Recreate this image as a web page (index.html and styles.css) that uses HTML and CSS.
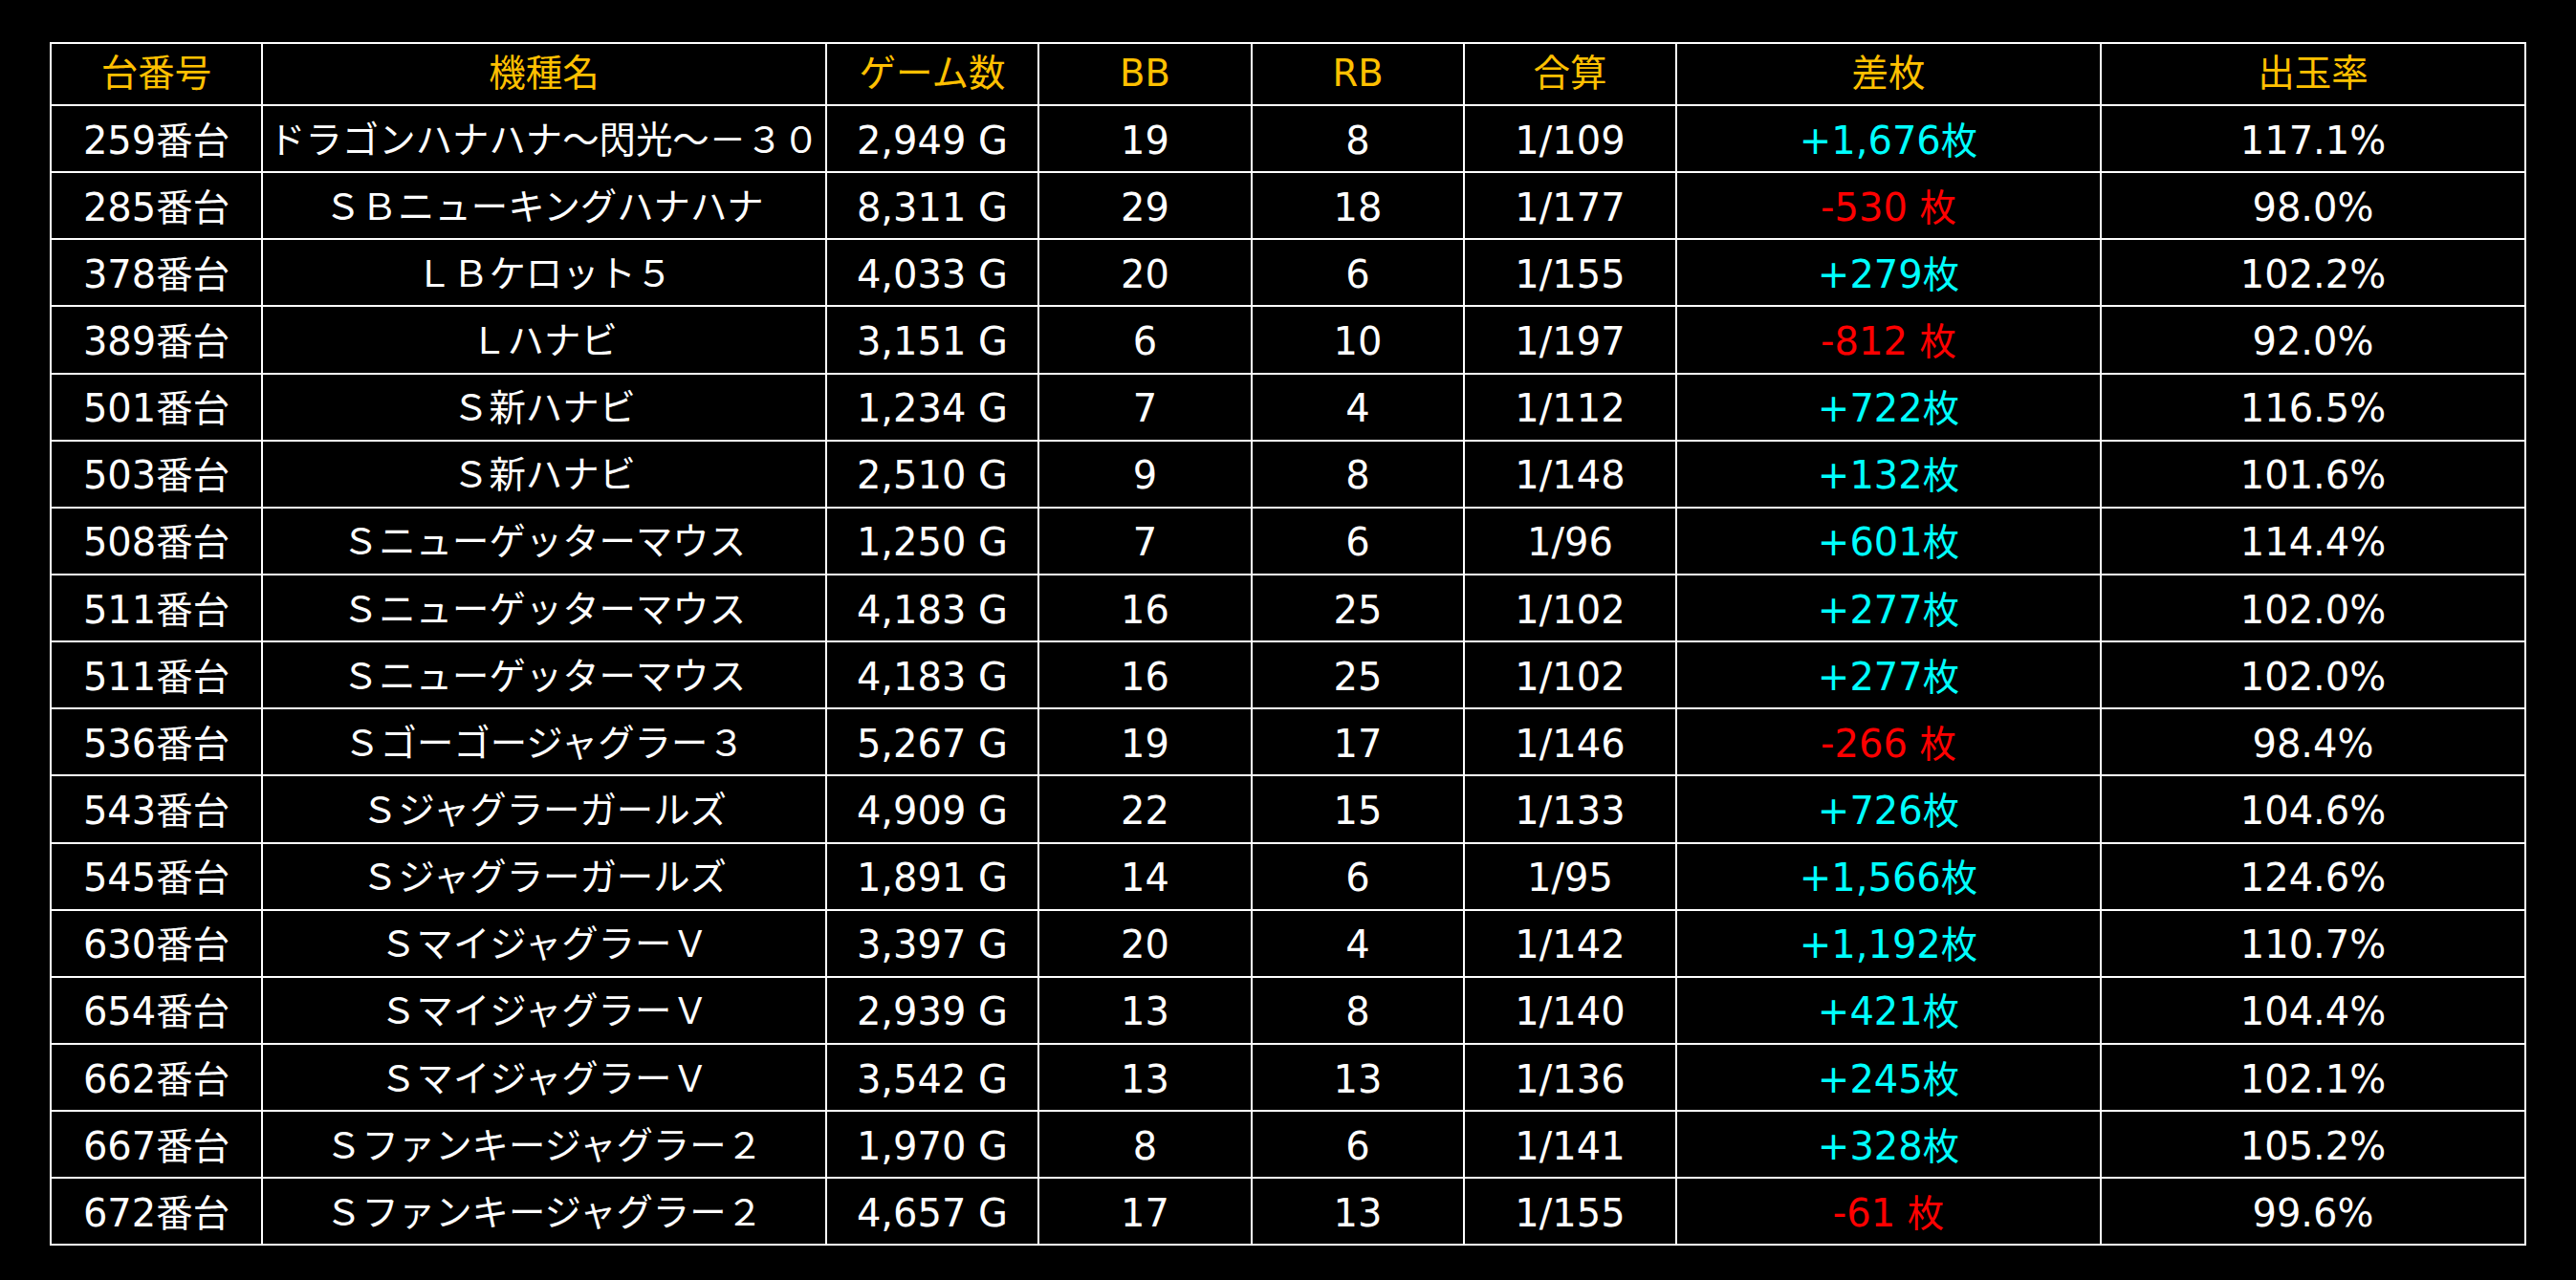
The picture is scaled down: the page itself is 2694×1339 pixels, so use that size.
FILE: index.html
```html
<!DOCTYPE html>
<html lang="ja">
<head>
<meta charset="utf-8">
<title>台データ</title>
<link rel="stylesheet" href="styles.css">
</head>
<body>
<table class="data">
  <colgroup>
    <col class="c-no"><col class="c-name"><col class="c-g"><col class="c-bb"><col class="c-rb"><col class="c-sum"><col class="c-diff"><col class="c-rate">
  </colgroup>
  <thead>
    <tr><th>台番号</th><th>機種名</th><th>ゲーム数</th><th>BB</th><th>RB</th><th>合算</th><th>差枚</th><th>出玉率</th></tr>
  </thead>
  <tbody>
    <tr><td>259<span class="j">番台</span></td><td class="j">ドラゴンハナハナ〜閃光〜－３０</td><td>2,949 G</td><td>19</td><td>8</td><td>1/109</td><td class="plus">+1,676<span class="j">枚</span></td><td>117.1%</td></tr>
    <tr><td>285<span class="j">番台</span></td><td class="j">ＳＢニューキングハナハナ</td><td>8,311 G</td><td>29</td><td>18</td><td>1/177</td><td class="minus">-530 <span class="j">枚</span></td><td>98.0%</td></tr>
    <tr><td>378<span class="j">番台</span></td><td class="j">ＬＢケロット５</td><td>4,033 G</td><td>20</td><td>6</td><td>1/155</td><td class="plus">+279<span class="j">枚</span></td><td>102.2%</td></tr>
    <tr><td>389<span class="j">番台</span></td><td class="j">Ｌハナビ</td><td>3,151 G</td><td>6</td><td>10</td><td>1/197</td><td class="minus">-812 <span class="j">枚</span></td><td>92.0%</td></tr>
    <tr><td>501<span class="j">番台</span></td><td class="j">Ｓ新ハナビ</td><td>1,234 G</td><td>7</td><td>4</td><td>1/112</td><td class="plus">+722<span class="j">枚</span></td><td>116.5%</td></tr>
    <tr><td>503<span class="j">番台</span></td><td class="j">Ｓ新ハナビ</td><td>2,510 G</td><td>9</td><td>8</td><td>1/148</td><td class="plus">+132<span class="j">枚</span></td><td>101.6%</td></tr>
    <tr><td>508<span class="j">番台</span></td><td class="j">Ｓニューゲッターマウス</td><td>1,250 G</td><td>7</td><td>6</td><td>1/96</td><td class="plus">+601<span class="j">枚</span></td><td>114.4%</td></tr>
    <tr><td>511<span class="j">番台</span></td><td class="j">Ｓニューゲッターマウス</td><td>4,183 G</td><td>16</td><td>25</td><td>1/102</td><td class="plus">+277<span class="j">枚</span></td><td>102.0%</td></tr>
    <tr><td>511<span class="j">番台</span></td><td class="j">Ｓニューゲッターマウス</td><td>4,183 G</td><td>16</td><td>25</td><td>1/102</td><td class="plus">+277<span class="j">枚</span></td><td>102.0%</td></tr>
    <tr><td>536<span class="j">番台</span></td><td class="j">Ｓゴーゴージャグラー３</td><td>5,267 G</td><td>19</td><td>17</td><td>1/146</td><td class="minus">-266 <span class="j">枚</span></td><td>98.4%</td></tr>
    <tr><td>543<span class="j">番台</span></td><td class="j">Ｓジャグラーガールズ</td><td>4,909 G</td><td>22</td><td>15</td><td>1/133</td><td class="plus">+726<span class="j">枚</span></td><td>104.6%</td></tr>
    <tr><td>545<span class="j">番台</span></td><td class="j">Ｓジャグラーガールズ</td><td>1,891 G</td><td>14</td><td>6</td><td>1/95</td><td class="plus">+1,566<span class="j">枚</span></td><td>124.6%</td></tr>
    <tr><td>630<span class="j">番台</span></td><td class="j">ＳマイジャグラーＶ</td><td>3,397 G</td><td>20</td><td>4</td><td>1/142</td><td class="plus">+1,192<span class="j">枚</span></td><td>110.7%</td></tr>
    <tr><td>654<span class="j">番台</span></td><td class="j">ＳマイジャグラーＶ</td><td>2,939 G</td><td>13</td><td>8</td><td>1/140</td><td class="plus">+421<span class="j">枚</span></td><td>104.4%</td></tr>
    <tr><td>662<span class="j">番台</span></td><td class="j">ＳマイジャグラーＶ</td><td>3,542 G</td><td>13</td><td>13</td><td>1/136</td><td class="plus">+245<span class="j">枚</span></td><td>102.1%</td></tr>
    <tr><td>667<span class="j">番台</span></td><td class="j">Ｓファンキージャグラー２</td><td>1,970 G</td><td>8</td><td>6</td><td>1/141</td><td class="plus">+328<span class="j">枚</span></td><td>105.2%</td></tr>
    <tr><td>672<span class="j">番台</span></td><td class="j">Ｓファンキージャグラー２</td><td>4,657 G</td><td>17</td><td>13</td><td>1/155</td><td class="minus">-61 <span class="j">枚</span></td><td>99.6%</td></tr>
  </tbody>
</table>
</body>
</html>
```

FILE: styles.css
```css
html, body {
  margin: 0;
  padding: 0;
  background: #000;
}

body {
  font-family: "DejaVu Sans", "Noto Sans CJK JP", sans-serif;
  color: #fff;
}

.data {
  margin: 44px 0 0 52px;
  width: 2590px;
  table-layout: fixed;
  border-collapse: separate;
  border-spacing: 0;
  border-top: 2px solid #fff;
  border-left: 2px solid #fff;
}

.c-no { width: 221px; }
.c-name { width: 590px; }
.c-g { width: 222px; }
.c-bb { width: 223px; }
.c-rb { width: 222px; }
.c-sum { width: 222px; }
.c-diff { width: 444px; }
.c-rate { width: 444px; }

.data th,
.data td {
  box-sizing: border-box;
  border-right: 2px solid #fff;
  border-bottom: 2px solid #fff;
  text-align: center;
  vertical-align: middle;
  white-space: nowrap;
  overflow: hidden;
  padding: 0;
  line-height: 1.2;
}

.data thead tr { height: 65px; }

.data th {
  font-size: 38.5px;
  font-weight: normal;
  color: #ffc000;
}

.data tbody tr { height: 70.15px; }

.data td {
  font-size: 40px;
  padding-top: 3px;
}

.data .j { font-size: 0.96em; }

.data td.j { font-size: 38.4px; }

.plus { color: #00ffff; }
.minus { color: #ff0000; }
```
